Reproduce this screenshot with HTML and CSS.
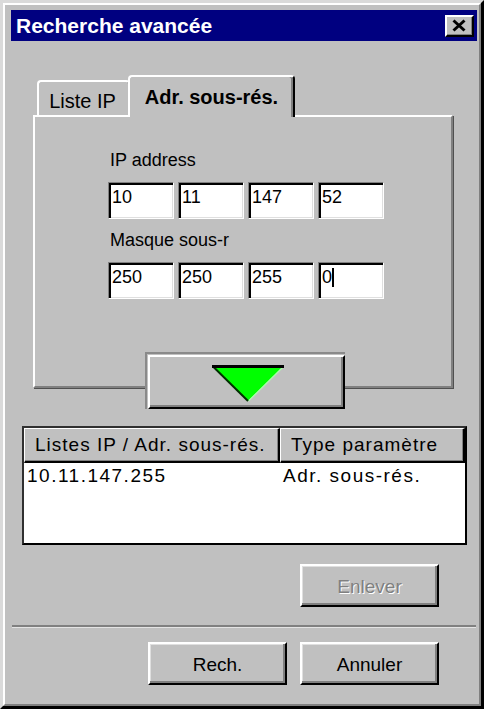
FILE: index.html
```html
<!DOCTYPE html>
<html lang="fr">
<head>
<meta charset="utf-8">
<title>Recherche avancée</title>
<link rel="stylesheet" href="styles.css">
</head>
<body>
<div class="window">
  <div class="frame">
    <div class="titlebar">
      <span class="title">Recherche avancée</span>
      <button class="close" type="button" aria-label="Fermer">
        <svg width="14" height="13" viewBox="0 0 14 13"><path d="M1.5 1.5 L12.5 11.5 M12.5 1.5 L1.5 11.5" stroke="#000" stroke-width="3" fill="none"/></svg>
      </button>
    </div>
    <div class="client">
      <div class="tabstrip">
        <div class="tab">Liste IP</div>
        <div class="tab active">Adr. sous-rés.</div>
      </div>
      <div class="panel">
        <div class="label">IP address</div>
        <div class="iprow">
          <div class="field">10</div>
          <div class="field">11</div>
          <div class="field">147</div>
          <div class="field">52</div>
        </div>
        <div class="label label2">Masque sous-r</div>
        <div class="iprow">
          <div class="field">250</div>
          <div class="field">250</div>
          <div class="field">255</div>
          <div class="field">0<span class="caret"></span></div>
        </div>
      </div>
      <div class="arrow-row">
        <div class="arrow-wrap">
          <button class="arrow-btn" type="button" aria-label="Ajouter">
            <svg width="72" height="37" viewBox="0 0 72 37">
              <polygon points="1,1.5 71,1.5 36,36" fill="#00ff00"/>
              <path d="M71 2 L36.5 36" stroke="#a8ffa8" stroke-width="1.2" fill="none"/>
              <path d="M1.5 2 L36 36" stroke="#003000" stroke-width="2" fill="none"/>
              <path d="M0 1.5 L72 1.5" stroke="#000" stroke-width="3" fill="none"/>
            </svg>
          </button>
        </div>
      </div>
      <div class="list">
        <div class="lhead">
          <div class="hcell c1">Listes IP / Adr. sous-rés.</div>
          <div class="hcell c2">Type paramètre</div>
        </div>
        <div class="lrow">
          <div class="lcell c1">10.11.147.255</div>
          <div class="lcell c2">Adr. sous-rés.</div>
        </div>
      </div>
      <div class="remove-row">
        <button class="btn" type="button" disabled>Enlever</button>
      </div>
      <div class="sep"></div>
      <div class="actions">
        <button class="btn" type="button">Rech.</button>
        <button class="btn" type="button">Annuler</button>
      </div>
    </div>
  </div>
</div>
</body>
</html>
```
FILE: styles.css
```css
html, body {
  margin: 0;
  padding: 0;
  background: #c0c0c0;
}

body {
  font-family: "Liberation Sans", Arial, sans-serif;
  color: #000;
}

.window {
  width: 484px;
  height: 709px;
  box-sizing: border-box;
  border-style: solid;
  border-width: 3px;
  border-color: #dadada #000 #000 #dadada;
}

.frame {
  height: 100%;
  box-sizing: border-box;
  border: 2px solid;
  border-color: #fff #808080 #808080 #fff;
  padding: 5px 2px 0 6px;
  display: flex;
  flex-direction: column;
  background: #c0c0c0;
}

.titlebar {
  height: 31px;
  flex: none;
  background: #000080;
  display: flex;
  align-items: center;
  justify-content: space-between;
  padding: 0 3px 0 5px;
}

.title {
  color: #fff;
  font-weight: bold;
  font-size: 21px;
  line-height: 24px;
}

.close {
  width: 29px;
  height: 22px;
  box-sizing: border-box;
  padding: 0 1px 0 0;
  margin: 0;
  background: #c0c0c0;
  border: 2px solid;
  border-color: #fff #000 #000 #fff;
  box-shadow: inset -1px -1px 0 #808080;
  display: flex;
  align-items: center;
  justify-content: center;
}

.close svg {
  display: block;
}

.client {
  flex: 1;
  display: flex;
  flex-direction: column;
}

/* Tabs */
.tabstrip {
  display: flex;
  align-items: flex-end;
  margin: 34px 0 0 26px;
}

.tab {
  box-sizing: border-box;
  height: 35px;
  width: 93px;
  border: 2px solid;
  border-bottom: none;
  border-color: #fff #808080 transparent #fff;
  border-radius: 4px 4px 0 0;
  font-size: 20px;
  line-height: 22px;
  display: flex;
  align-items: center;
  justify-content: center;
  padding-top: 4px;
  padding-right: 2px;
}

.tab.active {
  height: 42px;
  width: 167px;
  margin-left: -2px;
  margin-bottom: -2px;
  padding-top: 0;
  padding-right: 0;
  font-weight: bold;
  position: relative;
  z-index: 2;
  background: #c0c0c0;
  border-right-color: #000;
  box-shadow: inset -2px 0 0 #808080;
}

.panel {
  margin-left: 22px;
  width: 420px;
  height: 273px;
  box-sizing: border-box;
  border: 2px solid;
  border-color: #fff #808080 #808080 #fff;
  box-shadow: 1px 1px 0 #505050;
  padding: 32px 0 0 73px;
}

.label {
  font-size: 18px;
  line-height: 22px;
  margin-left: 2px;
}

.label2 {
  margin-top: 10px;
}

.iprow {
  display: flex;
  gap: 4px;
  margin-top: 11px;
}

.field {
  width: 66px;
  height: 37px;
  box-sizing: border-box;
  background: #fff;
  border: 1px solid;
  border-color: #808080 #fff #fff #808080;
  box-shadow: inset 2px 2px 0 #000, inset -1px -1px 0 #dfdfdf;
  padding: 3px 0 0 3px;
  font-size: 18px;
  line-height: 22px;
}

.caret {
  display: inline-block;
  width: 2px;
  height: 19px;
  background: #000;
  vertical-align: -4px;
  margin-left: 0;
}

/* Arrow button */
.arrow-row {
  display: flex;
  justify-content: center;
  margin-top: -36px;
  padding-left: 1px;
  position: relative;
  z-index: 3;
}

.arrow-wrap {
  width: 200px;
  height: 57px;
  box-sizing: border-box;
  border-top: 2px solid #8a8a8a;
  border-left: 2px solid #8a8a8a;
  padding: 1px 0 0 1px;
  background: #c0c0c0;
}

.arrow-btn {
  width: 100%;
  height: 100%;
  box-sizing: border-box;
  margin: 0;
  padding: 3px 0 0 3px;
  background: #c0c0c0;
  border: 2px solid;
  border-color: #fff #000 #000 #fff;
  box-shadow: inset -2px -2px 0 #808080;
  display: flex;
  align-items: center;
  justify-content: center;
}

.arrow-btn svg {
  display: block;
}

/* List view */
.list {
  margin: 17px 0 0 11px;
  width: 445px;
  height: 119px;
  box-sizing: border-box;
  border: 2px solid;
  border-color: #303030 #000 #000 #303030;
  background: #fff;
}

.lhead {
  display: flex;
  height: 35px;
}

.hcell {
  box-sizing: border-box;
  height: 35px;
  background: #c0c0c0;
  border-top: 1px solid #fff;
  border-left: 1px solid #fff;
  border-right: 2px solid #000;
  border-bottom: 2px solid #000;
  box-shadow: inset -1px -1px 0 #808080;
  padding-left: 10px;
  font-size: 19px;
  letter-spacing: 1px;
  line-height: 32px;
  white-space: nowrap;
}

.c1 {
  width: 256px;
}

.c2 {
  width: 185px;
}

.lrow {
  display: flex;
  font-size: 19px;
  letter-spacing: 1.5px;
  line-height: 26px;
}

.lcell {
  box-sizing: border-box;
  padding-left: 3px;
  white-space: nowrap;
}

/* Buttons */
.remove-row {
  display: flex;
  justify-content: flex-end;
  margin-top: 19px;
  padding-right: 38px;
}

.btn {
  width: 139px;
  height: 43px;
  box-sizing: border-box;
  margin: 0;
  padding: 2px 0 0 0;
  background: #c0c0c0;
  border: 2px solid;
  border-color: #fff #000 #000 #fff;
  box-shadow: inset -2px -2px 0 #808080, inset 1px 1px 0 #dfdfdf;
  font-family: "Liberation Sans", Arial, sans-serif;
  font-size: 19px;
  color: #000;
}

.btn:disabled {
  color: #808080;
  text-shadow: 1px 1px 0 #fff;
}

.sep {
  margin: 18px 1px 0 1px;
  border-top: 2px solid #808080;
  border-bottom: 1px solid #e4e4e4;
}

.actions {
  display: flex;
  justify-content: flex-end;
  gap: 13px;
  margin-top: 14px;
  padding-right: 38px;
}
```
